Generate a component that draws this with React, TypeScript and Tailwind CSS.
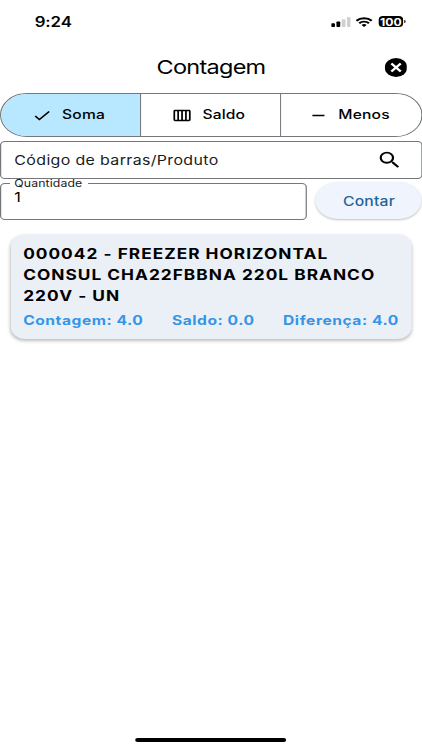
import { useState } from 'react';
import { MdCheck, MdOutlineCalendarViewWeek, MdRemove, MdSearch } from 'react-icons/md';

type Mode = 'soma' | 'saldo' | 'menos';

const modes = [
  { id: 'soma' as Mode, label: 'Soma', icon: MdCheck },
  { id: 'saldo' as Mode, label: 'Saldo', icon: MdOutlineCalendarViewWeek },
  { id: 'menos' as Mode, label: 'Menos', icon: MdRemove },
];

const product = {
  lines: ['000042 - FREEZER HORIZONTAL', 'CONSUL CHA22FBBNA 220L BRANCO', '220V - UN'],
  stats: ['Contagem: 4.0', 'Saldo: 0.0', 'Diferença: 4.0'],
};

function StatusBar() {
  return (
    <div className="flex h-[43px] items-center justify-between pl-[28.5px] pr-[13.4px]">
      <span className="pt-[1px] text-[13.8px] font-semibold tracking-[-0.1px]">9:24</span>
      <div className="flex items-center gap-[4.5px]">
        <svg width="16" height="10" viewBox="0 0 16 10">
          <rect x="0" y="6.3" width="3.1" height="3.7" rx="0.8" fill="#000" />
          <rect x="4.3" y="4.5" width="3.1" height="5.5" rx="0.8" fill="#000" />
          <rect x="8.6" y="2.2" width="3.1" height="7.8" rx="0.8" fill="#d0d0d0" />
          <rect x="12.9" y="0" width="3.1" height="10" rx="0.8" fill="#d0d0d0" />
        </svg>
        <svg width="14" height="10" viewBox="0 0 14 10" fill="none" stroke="#000" strokeWidth="1.9">
          <path d="M0.7 3.8a9 9 0 0 1 12.6 0" />
          <path d="M3 6.3a5.7 5.7 0 0 1 8 0" />
          <path d="M7 10 4.9 8a3 3 0 0 1 4.2 0z" fill="#000" stroke="none" />
        </svg>
        <div className="flex items-center">
          <div className="flex h-[11.5px] w-[20.8px] items-center justify-center rounded-[3.5px] bg-black text-[10px] font-bold leading-none text-white">
            100
          </div>
          <div className="ml-[0.6px] h-[3.5px] w-[1.2px] rounded-r-full bg-black" />
        </div>
      </div>
    </div>
  );
}

export default function App() {
  const [mode, setMode] = useState<Mode>('soma');

  return (
    <div className="h-[750px] w-[422px] overflow-hidden bg-white">
      <main className="flex h-full w-[346.56px] origin-top-left scale-x-[1.2177] flex-col font-['Inter','Liberation_Sans',sans-serif] text-black">
        <StatusBar />

        <header className="mb-[2px] grid h-[48px] grid-cols-[1fr_auto_1fr] items-center">
          <span />
          <h1 className="pt-[2px] text-[19.3px] font-normal leading-none tracking-[-0.6px]">Contagem</h1>
          <button className="mr-[12.5px] justify-self-end" aria-label="Fechar">
            <svg width="18.5" height="19" viewBox="0 0 18.5 18.5" preserveAspectRatio="none">
              <circle cx="9.25" cy="9.25" r="9.25" fill="#000" />
              <path d="M5.4 5.4l7.7 7.7M13.1 5.4l-7.7 7.7" stroke="#fff" strokeWidth="2.1" />
            </svg>
          </button>
        </header>

        <div className="flex h-[44px] overflow-hidden rounded-full border border-[#74777b]">
          {modes.map(({ id, label, icon: Icon }) => (
            <button
              key={id}
              onClick={() => setMode(id)}
              className={`flex flex-1 items-center justify-center gap-[8px] border-[#74777b] pr-[4px] text-[12.8px] font-medium tracking-[0.15px] not-last:border-r ${
                mode === id ? 'bg-[#b8e8ff]' : 'bg-white'
              }`}
            >
              <Icon size={17} />
              <span>{label}</span>
            </button>
          ))}
        </div>

        <div className="mt-[4px] flex h-[38px] items-center justify-between rounded-[4px] border border-[#74777b] pl-[10.8px] pr-[15px]">
          <span className="pt-[1.5px] text-[13.1px] tracking-[0.29px] text-[#191c1e]">Código de barras/Produto</span>
          <MdSearch size={22} />
        </div>

        <div className="mt-[-1px] flex gap-[7px] pr-[0.8px]">
          <fieldset className="h-[42px] w-[251.8px] rounded-[4px] border border-[#74777b] pl-[10.8px]">
            <legend className="-ml-[4px] px-[4px] pb-[1px] pt-[1px] text-[10.1px] leading-[8px] tracking-[0.08px] text-[#191c1e]">Quantidade</legend>
            <span className="block pt-[1px] text-[13.3px] leading-[17px]">1</span>
          </fieldset>
          <button className="mt-[4px] h-[37px] flex-1 rounded-full bg-[#f0f4fc] pl-[1.5px] pt-[3px] text-[12.9px] font-medium tracking-[0.15px] text-[#1f659a] shadow-[0_1px_2px_rgba(0,0,0,0.25)]">
            Contar
          </button>
        </div>

        <section className="mx-[9px] mt-[14px] h-[105px] rounded-[12px] bg-[#ebf0f7] px-[10px] pt-[8.5px] shadow-[0_2px_3px_rgba(0,0,0,0.25)]">
          <h2 className="text-[14.2px] font-[650] leading-[21.2px] tracking-[0.83px]">
            {product.lines.map(line => (
              <span key={line} className="block whitespace-nowrap">{line}</span>
            ))}
          </h2>
          <div className="mt-[5.5px] flex justify-between whitespace-nowrap text-[12.8px] font-[650] leading-[18px] tracking-[0.45px] text-[#3495e8]">
            {product.stats.map(stat => (
              <span key={stat}>{stat}</span>
            ))}
          </div>
        </section>

        <div className="mx-auto mb-[8px] mt-auto h-[4.5px] w-[124px] rounded-full bg-black" />
      </main>
    </div>
  );
}
